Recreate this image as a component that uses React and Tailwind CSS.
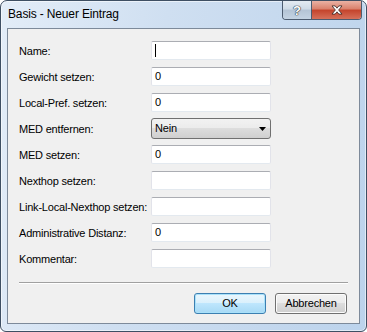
import React from "react";

const rows = [
  { label: "Name:", value: "", cursor: true },
  { label: "Gewicht setzen:", value: "0" },
  { label: "Local-Pref. setzen:", value: "0" },
  { label: "MED entfernen:", select: "Nein" },
  { label: "MED setzen:", value: "0" },
  { label: "Nexthop setzen:", value: "" },
  { label: "Link-Local-Nexthop setzen:", value: "" },
  { label: "Administrative Distanz:", value: "0" },
  { label: "Kommentar:", value: "" },
];

const TextBox = ({ value, cursor }) => (
  <div className="mt-[4px] h-[19px] w-[120px] rounded-[2px] border border-[#e2e3ea] border-t-[#abadb3] border-b-[#e3e9ef] bg-white flex items-center pl-[3px]">
    {cursor && <div className="w-px h-[13px] bg-black" />}
    {value && <span className="leading-none">{value}</span>}
  </div>
);

const Select = ({ value }) => (
  <div className="mt-[3px] h-[21px] w-[120px] rounded-[3px] border border-[#707070] bg-[linear-gradient(#f2f2f2_0%,#ebebeb_50%,#dddddd_50%,#cfcfcf_100%)] flex items-center pl-[3px] pr-[4px]">
    <span className="leading-none">{value}</span>
    <svg width="7" height="4" viewBox="0 0 7 4" className="ml-auto">
      <path d="M0 0H7L3.5 4Z" fill="#000" />
    </svg>
  </div>
);

const Button = ({ children, primary }) => (
  <div
    className={`w-[72px] h-[21px] rounded-[3px] border flex items-center justify-center leading-none ${
      primary
        ? "border-[#3c7fb1] bg-[linear-gradient(#eaf6fd_0%,#d9f0fc_50%,#bee6fd_50%,#a7d9f5_100%)] shadow-[inset_0_0_0_1px_#a9e1fa]"
        : "border-[#707070] bg-[linear-gradient(#f2f2f2_0%,#ebebeb_50%,#dddddd_50%,#cfcfcf_100%)] shadow-[inset_0_0_0_1px_#fcfcfc]"
    }`}
  >
    {children}
  </div>
);

export default function App() {
  return (
    <div
      className="w-[367px] h-[332px] bg-white"
      style={{ fontFamily: '"Liberation Sans", Arial, sans-serif' }}
    >
      <div className="w-[367px] h-[332px] rounded-t-[7px] rounded-b-[6px] border border-[#3e4f63] bg-[linear-gradient(100deg,#e3edf8_0%,#cfdff1_40%,#bcd3ec_100%)] shadow-[inset_0_0_0_1px_rgba(255,255,255,0.55)] flex flex-col">
        {/* Title bar */}
        <div className="h-[27px] flex items-start">
          <div className="pl-[7px] pt-[6px] text-[12px] leading-[14px] tracking-[-0.15px] text-black">
            Basis - Neuer Eintrag
          </div>
          <div className="ml-auto mr-[4px] h-[19px] flex rounded-b-[4px] border border-t-0 border-[#4d5c70] overflow-hidden">
            <div className="w-[28px] h-full bg-[linear-gradient(#e4ebf2_0%,#cfdbe7_45%,#b4c4d6_50%,#c4d3e3_100%)] flex items-center justify-center">
              <span
                className="text-[13px] font-bold leading-none text-white"
                style={{ textShadow: "0 0 1px #2a3440, 0 0 1px #2a3440, 0 0 1px #2a3440" }}
              >
                ?
              </span>
            </div>
            <div className="w-px h-full bg-[#4d5c70]" />
            <div className="w-[49px] h-full bg-[linear-gradient(#eab2a4_0%,#d9806b_45%,#c4432b_50%,#d6705a_100%)] flex items-center justify-center">
              <svg width="12" height="10" viewBox="0 0 13 11">
                <path
                  d="M1 1H4.5L6.5 3.5L8.5 1H12L8.3 5.5L12 10H8.5L6.5 7.5L4.5 10H1L4.7 5.5Z"
                  fill="#fff"
                  stroke="#3a2a26"
                  strokeWidth="0.9"
                  strokeLinejoin="round"
                />
              </svg>
            </div>
          </div>
        </div>

        {/* Client area */}
        <div className="mx-[6px] h-[296px] border border-[#7d8a9a] bg-[#f0f0f0] text-[11px] tracking-[-0.2px] text-black flex flex-col">
          <div className="pt-[8px] pl-[11px]">
            {rows.map((r) => (
              <div key={r.label} className="h-[26px] flex items-start">
                <div className="w-[132px] leading-[26px] mt-[1px] whitespace-nowrap">
                  {r.label}
                </div>
                {r.select ? (
                  <Select value={r.select} />
                ) : (
                  <TextBox value={r.value} cursor={r.cursor} />
                )}
              </div>
            ))}
          </div>

          <div className="mt-[11px] mx-[11px] h-[2px] border-t border-[#a0a0a0] border-b border-b-white" />

          <div className="mt-[9px] pr-[12px] flex justify-end gap-[9px]">
            <Button primary>OK</Button>
            <Button>Abbrechen</Button>
          </div>
        </div>
      </div>
    </div>
  );
}
